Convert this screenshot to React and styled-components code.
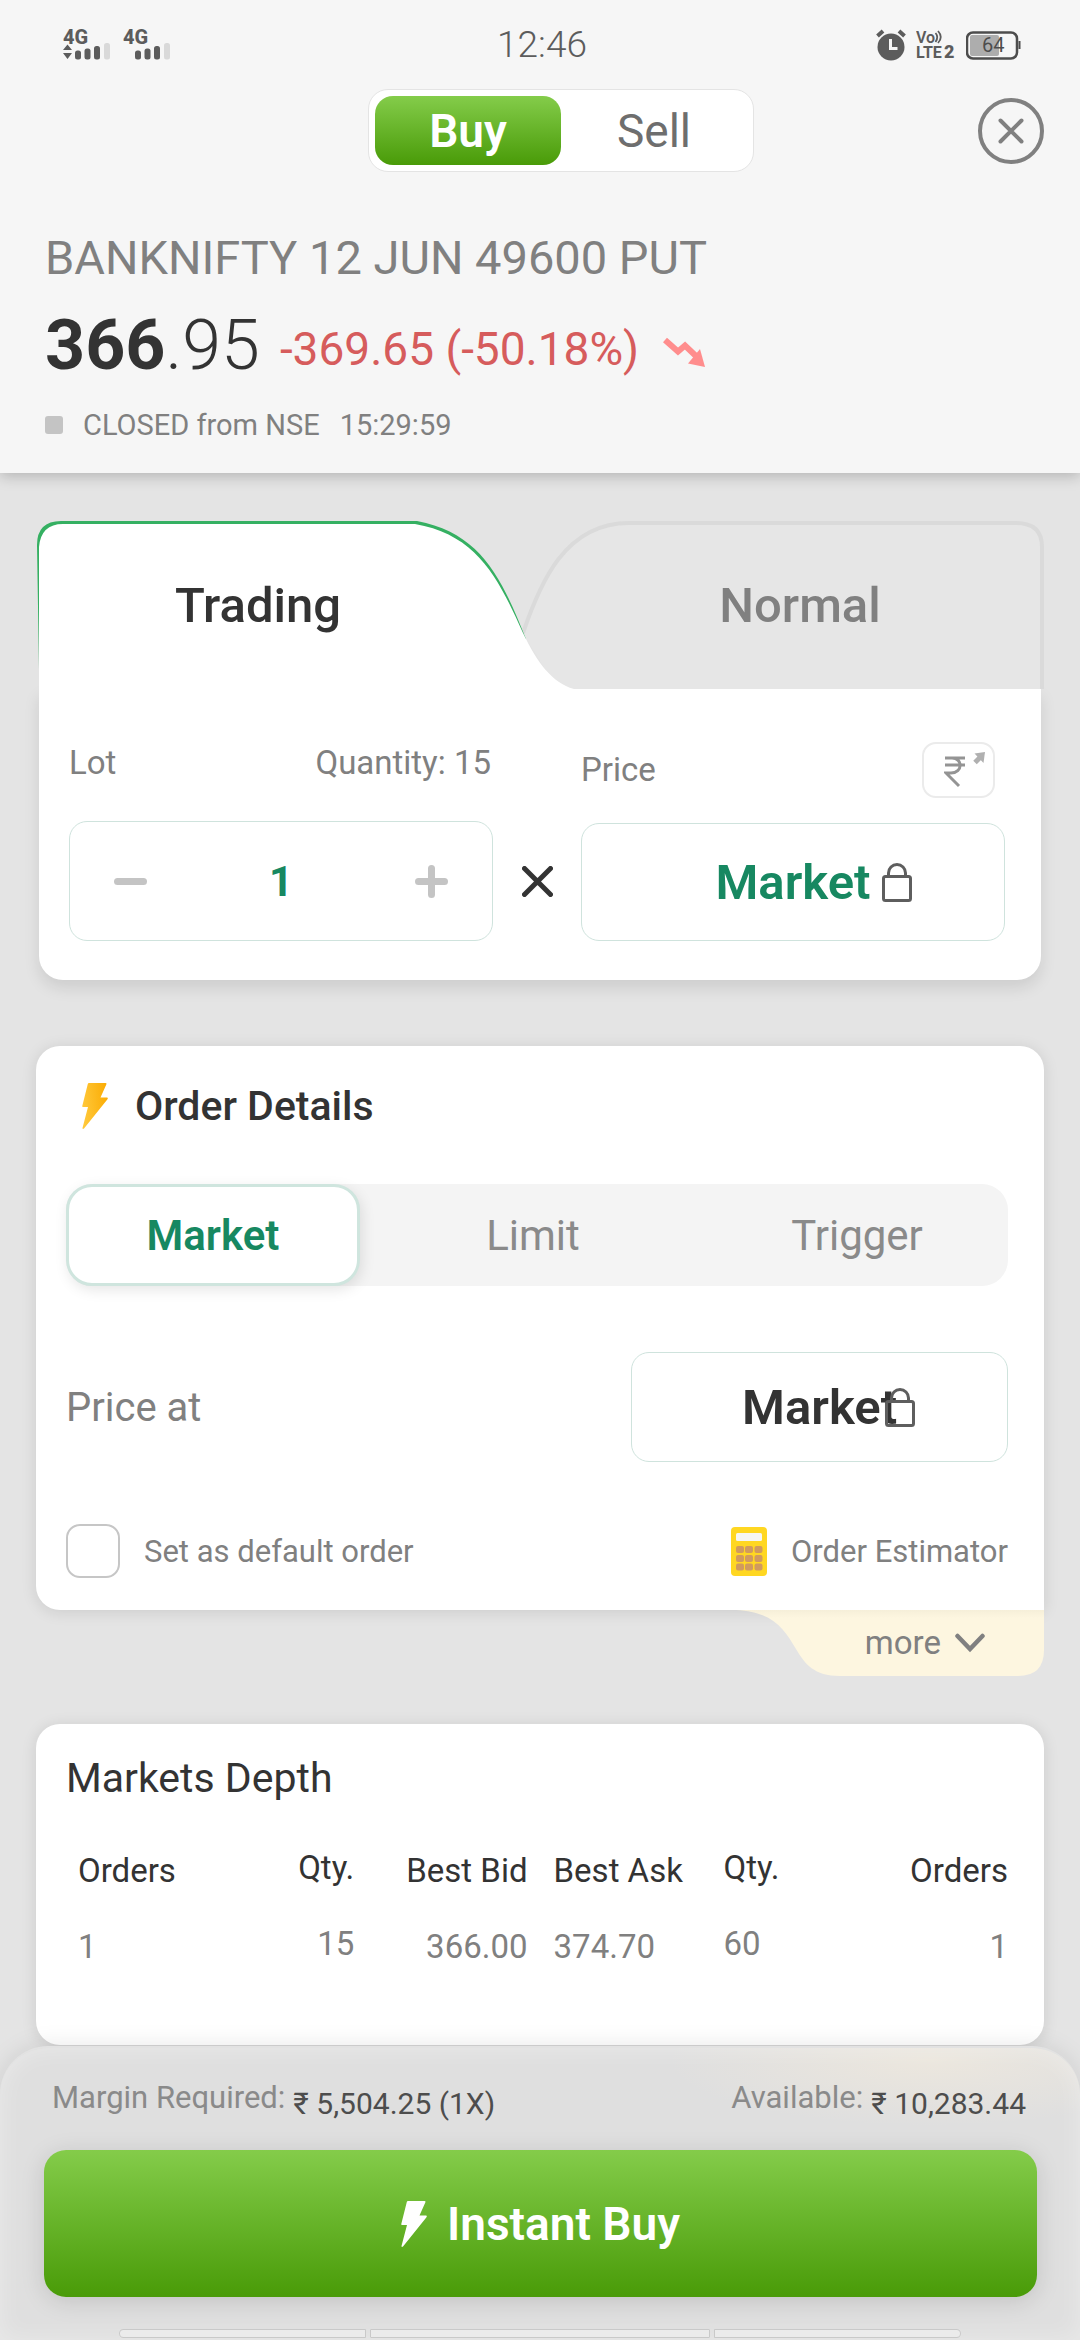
import React, { useState } from 'react';
import styled, { createGlobalStyle, css } from 'styled-components';

const GlobalStyle = createGlobalStyle`
  * {
    box-sizing: border-box;
  }

  body {
    margin: 0;
    background: #e4e4e4;
    color: #333333;
    font-family: Roboto, "Open Sans", sans-serif;
  }

  button, input {
    font-family: inherit;
    color: inherit;
  }

  button {
    border: none;
    background: none;
    padding: 0;
    cursor: pointer;
  }

  svg {
    display: block;
    flex-shrink: 0;
  }
`;

const Page = styled.div`
  min-height: 100vh;
  display: flex;
  flex-direction: column;
`;

/* Header */

const Header = styled.header`
  background: #f6f6f6;
  padding-bottom: 28px;
  box-shadow: 0 3px 14px rgba(0, 0, 0, 0.22);
`;

const StatusBar = styled.div`
  display: grid;
  grid-template-columns: 1fr auto 1fr;
  align-items: center;
  height: 89px;
  padding: 0 59px 0 63px;
  color: #5c5c5c;
`;

const StatusGroup = styled.div`
  display: flex;
  align-items: center;
  gap: ${props => props.$gap}px;
  justify-content: ${props => (props.$end ? 'flex-end' : 'flex-start')};
`;

const Clock = styled.span`
  font-size: 37px;
  font-weight: 300;
`;

const TopRow = styled.div`
  display: grid;
  grid-template-columns: 368fr 386fr 326fr;
  align-items: center;
`;

const Toggle = styled.div`
  grid-column: 2;
  display: flex;
  padding: 6px;
  background: #ffffff;
  border: 1px solid #e4e4e4;
  border-radius: 20px;
`;

const ToggleButton = styled.button`
  flex: 1;
  height: 69px;
  border-radius: 18px;
  font-size: 46px;
  font-weight: ${props => (props.$active ? 600 : 400)};
  color: ${props => (props.$active ? '#ffffff' : '#6e6e6e')};
  background: ${props => (props.$active ? 'linear-gradient(#84cc4a, #499b08)' : 'none')};
`;

const CloseButton = styled.button`
  justify-self: end;
  display: grid;
  place-items: center;
  width: 66px;
  height: 66px;
  margin-right: 36px;
  border: 4px solid #808080;
  border-radius: 50%;
`;

const Quote = styled.div`
  padding: 56px 45px 0;
`;

const Symbol = styled.h1`
  margin: 0;
  font-size: 47px;
  font-weight: 400;
  line-height: 60px;
  color: #808080;
`;

const PriceRow = styled.div`
  display: flex;
  align-items: flex-end;
  margin: 17px 0 20px;
`;

const LastPrice = styled.div`
  font-size: 70px;
  font-weight: 300;
  line-height: 80px;

  strong {
    font-weight: 700;
  }
`;

const Change = styled.div`
  margin: 0 24px 0 20px;
  font-size: 46px;
  line-height: 72px;
  color: #d65c5c;
`;

const TrendIcon = styled.svg`
  margin-bottom: 18px;
`;

const SessionRow = styled.div`
  display: flex;
  align-items: center;
  gap: 20px;
  font-size: 29px;
  line-height: 40px;
  color: #808080;
`;

const SessionDot = styled.span`
  width: 18px;
  height: 18px;
  border-radius: 3px;
  background: #c4c4c4;
`;

/* Cards */

const Content = styled.main`
  padding: 48px 36px 0;
`;

const Card = styled.section`
  position: relative;
  background: #ffffff;
  border-radius: 24px;
  box-shadow: 0 2px 16px rgba(0, 0, 0, 0.11);
`;

const TicketCard = styled.section`
  margin: 0 0 66px 1px;
`;

const TabStrip = styled.div`
  position: relative;
  z-index: 1;
  display: grid;
  grid-template-columns: 442fr 488fr;
  column-gap: 77px;
  height: 168px;
`;

const TabShape = styled.svg`
  position: absolute;
  inset: 0;
  width: 100%;
  height: 100%;
`;

const ProductTab = styled.button`
  position: relative;
  font-size: 49px;
  font-weight: 500;
  color: ${props => (props.$active ? '#333333' : '#808080')};
`;

const TicketBody = styled.div`
  display: grid;
  grid-template-columns: 1fr 88px 1fr;
  margin: 0 3px 0 2px;
  padding: 53px 36px 39px 30px;
  background: #ffffff;
  border-radius: 0 0 24px 24px;
  box-shadow: 0 8px 16px rgba(0, 0, 0, 0.1);
`;

const Field = styled.div`
  display: flex;
  flex-direction: column;
  gap: ${props => props.$gap}px;
`;

const FieldHeader = styled.div`
  display: flex;
  align-items: center;
  justify-content: space-between;
  padding: 0 ${props => props.$right}px 0 0;
  font-size: 33px;
  line-height: 42px;
  color: #808080;
`;

const outlined = css`
  background: #ffffff;
  border: 1px solid #cfe3dd;
  border-radius: 18px;
`;

const Stepper = styled.div`
  ${outlined}
  display: flex;
  align-items: center;
  justify-content: space-between;
  height: 120px;
  padding: 0 44px;
`;

const StepButton = styled.button`
  padding: 12px 0;
`;

const LotInput = styled.input`
  width: 120px;
  border: none;
  outline: none;
  padding: 0;
  text-align: center;
  font-size: 42px;
  font-weight: 700;
  background: none;
  color: #178861;
`;

const Times = styled.div`
  align-self: start;
  display: grid;
  place-items: center;
  height: 120px;
  margin-top: 79px;
`;

const RupeeButton = styled.button`
  display: flex;
  justify-content: flex-end;
  width: 73px;
  height: 56px;
  padding: 8px 7px 0 0;
  border: 2px solid #ebebeb;
  border-radius: 14px;
`;

const LockedBox = styled.div`
  position: relative;
  width: ${props => props.$width || '100%'};
`;

const LockedInput = styled.input`
  ${outlined}
  display: block;
  width: 100%;
  height: ${props => props.$height}px;
  padding: 0;
  text-align: center;
  font-size: 49px;
  font-weight: 600;
  outline: none;
  color: ${props => (props.$green ? '#178861' : '#333333')};
`;

const LockMark = styled.svg`
  position: absolute;
  top: 50%;
  right: 93px;
  margin-top: -19px;
`;

const DetailsCard = styled(Card)`
  padding: 36px 36px 32px 30px;
  border-bottom-right-radius: 0;
`;

const CardTitle = styled.h2`
  display: flex;
  align-items: center;
  gap: 27px;
  margin: 0;
  padding-left: ${props => (props.$icon ? 16 : 0)}px;
  font-size: 41px;
  font-weight: ${props => (props.$icon ? 500 : 400)};
  line-height: 48px;
`;

const TypeTabs = styled.div`
  display: grid;
  grid-template-columns: 294fr 346fr 302fr;
  height: 102px;
  margin: 54px 0 66px;
  background: #f4f4f4;
  border-radius: 26px;
`;

const TypeTab = styled.button`
  border-radius: 26px;
  font-size: 42px;
  color: #8a8a8a;

  ${props => props.$active && css`
    background: #ffffff;
    border: 3px solid #cfe5de;
    box-shadow: 2px 4px 14px rgba(0, 0, 0, 0.1);
    font-weight: 600;
    color: #178861;
  `}
`;

const SplitRow = styled.div`
  display: flex;
  align-items: center;
  justify-content: space-between;
`;

const PriceAt = styled.label`
  font-size: 40px;
  color: #808080;
`;

const FooterRow = styled(SplitRow)`
  margin-top: 62px;
  font-size: 31px;
  color: #808080;
`;

const CheckLabel = styled.label`
  display: flex;
  align-items: center;
  gap: 24px;
`;

const Checkbox = styled.input`
  appearance: none;
  width: 54px;
  height: 54px;
  margin: 0;
  border: 2px solid #c6c6c6;
  border-radius: 14px;
  background: ${props => (props.checked ? '#178861' : '#ffffff')};
`;

const EstimatorButton = styled.button`
  display: flex;
  align-items: center;
  gap: 24px;
  font-size: 31px;
`;

const MoreButton = styled.button`
  position: relative;
  display: flex;
  align-items: center;
  justify-content: flex-end;
  gap: 14px;
  width: 308px;
  height: 66px;
  margin: 0 0 48px auto;
  padding-right: 59px;
  font-size: 33px;
  line-height: 40px;
  color: #808080;
`;

const MoreLabel = styled.span`
  position: relative;
`;

const MoreChevron = styled.svg`
  position: relative;
`;

const DepthCard = styled(Card)`
  padding: 30px 36px 61px 30px;
`;

const DepthTable = styled.table`
  width: 100%;
  margin-top: 30px;
  table-layout: fixed;
  border-collapse: collapse;
`;

const columnStyle = css`
  height: 76px;
  padding: 0 0 ${props => (props.$raised ? 6 : 0)}px ${props => props.$indent || 0}px;
  text-align: ${props => props.$align};
  vertical-align: middle;
  font-size: 33px;
  font-weight: 400;
  white-space: nowrap;
`;

const HeadCell = styled.th`
  ${columnStyle}
  width: ${props => props.$width}%;
`;

const Cell = styled.td`
  ${columnStyle}
  color: #808080;
`;

/* Bottom sheet */

const Sheet = styled.footer`
  position: sticky;
  bottom: 0;
  margin-top: auto;
  padding: 26px 43px 2px 44px;
  border-top: 2px solid #e2e2e2;
  border-radius: 48px 48px 0 0;
  background:
    radial-gradient(ellipse 260px 66px at 86% 4%, #ece7de, rgba(236, 231, 222, 0)),
    #dfdfdf;
  box-shadow: 0 0 24px rgba(0, 0, 0, 0.1), inset 0 0 24px rgba(255, 255, 255, 0.35);
`;

const InfoRow = styled.div`
  display: flex;
  justify-content: space-between;
  margin-bottom: 16px;
  padding: 0 11px 0 8px;
`;

const Info = styled.div`
  display: flex;
  align-items: flex-start;
  gap: 8px;
`;

const InfoLabel = styled.span`
  font-size: 31px;
  line-height: 48px;
  color: #8a8a8a;
`;

const InfoValue = styled.span`
  font-size: 30px;
  line-height: 60px;
  color: #4d4d4d;
`;

const BuyButton = styled.button`
  display: flex;
  align-items: center;
  justify-content: center;
  gap: 20px;
  width: 100%;
  height: 147px;
  border-radius: 22px;
  background: linear-gradient(#84cc4a, #499b08);
  box-shadow: 0 4px 24px rgba(0, 0, 0, 0.13);
  font-size: 46px;
  font-weight: 600;
  color: #ffffff;
`;

const NavHint = styled.div`
  display: grid;
  grid-template-columns: 247fr 340fr 247fr;
  gap: 4px;
  margin: 32px 76px 0 75px;
`;

const NavKey = styled.span`
  height: 9px;
  border: 1px solid #c9c9c9;
  border-radius: ${props => props.$radius || '1px'};
  background: #ebebeb;
`;

const Signal = ({ data }) => (
  <svg width="48" height="44" viewBox="0 -6 48 44" fill="#5c5c5c">
    <text x="0" y="15" fontSize="20" fontWeight="800">4G</text>
    {data && <path d="M4.5 15.5 L9 21 H0 Z M0 24 H9 L4.5 30 Z" />}
    <rect x="12" y="21.5" width="6" height="9" rx="2.5" />
    <rect x="21.5" y="19.5" width="6" height="11" rx="2.5" />
    <rect x="31" y="17" width="6" height="13.5" rx="2.5" />
    <rect x="41" y="14" width="6" height="16.5" rx="2.5" fill="#d9d9d9" />
  </svg>
);

const AlarmIcon = () => (
  <svg width="30" height="32" viewBox="0 0 30 32">
    <circle cx="15" cy="18" r="13.5" fill="#5c5c5c" />
    <path d="M1.5 7 L7 2 M28.5 7 L23 2" stroke="#5c5c5c" strokeWidth="4" />
    <path d="M14.5 10 V19.5 H21.5" stroke="#f6f6f6" strokeWidth="3" fill="none" />
  </svg>
);

const VolteIcon = () => (
  <svg width="40" height="36" viewBox="0 -2 40 36" fill="#5c5c5c">
    <text x="0" y="14" fontSize="16" fontWeight="600">Vo</text>
    <path
      d="M19.5 4 Q23 8 19.5 13 M22 2 Q27.5 8 22 14"
      stroke="#5c5c5c"
      strokeWidth="1.8"
      fill="none"
    />
    <text x="0" y="29" fontSize="16" fontWeight="700">LTE</text>
    <text x="28" y="29" fontSize="18" fontWeight="900">2</text>
  </svg>
);

const BatteryIcon = () => (
  <svg width="55" height="32" viewBox="0 0 55 32">
    <rect x="4" y="6" width="29" height="21" rx="2" fill="#adadad" />
    <rect x="1" y="3.5" width="50" height="26" rx="6" fill="none" stroke="#4d4d4d" strokeWidth="2.5" />
    <path d="M53.5 12 V20" stroke="#4d4d4d" strokeWidth="2" />
    <text x="16" y="23" fontSize="20" fill="#4d4d4d">64</text>
  </svg>
);

const BoltIcon = ({ gradient }) => (
  <svg width="26" height="48" viewBox="0 0 26 48">
    <defs>
      <linearGradient id="bolt" x1="0" y1="0.5" x2="1" y2="0.3">
        <stop offset="0" stopColor="#ffc83a" />
        <stop offset="1" stopColor="#fbac04" />
      </linearGradient>
    </defs>
    <path
      d="M7 1 H23.5 Q25 1 24.3 2.5 L18.5 15.5 H25 Q26.5 16 25.3 17.5 L2 46.5 Q0.5 47.5 0.5 46 L6 25 H1.2 Q0 25 0.4 23.5 L5.8 2 Q6 1 7 1 Z"
      fill={gradient ? 'url(#bolt)' : '#ffffff'}
    />
  </svg>
);

const Lock = () => (
  <LockMark width="30" height="39" viewBox="0 0 30 39" fill="none" stroke="#5e5e5e" strokeWidth="3">
    <rect x="1.5" y="13.5" width="27" height="24" rx="2" />
    <path d="M6.5 13.5 V10 A8.5 8.5 0 0 1 23.5 10 V13.5" />
  </LockMark>
);

const CalculatorIcon = () => (
  <svg width="36" height="49" viewBox="0 0 36 49">
    <rect width="36" height="49" rx="4" fill="#ffd722" />
    <rect x="5" y="6" width="26" height="8" rx="1.5" fill="#f6f6f4" />
    {[19, 28, 36.5].map(y => [5, 14, 23.5].map(x => (
      <rect key={`${x}-${y}`} x={x} y={y} width="8" height="7" rx="2" fill="#d19a5e" />
    )))}
  </svg>
);

const depthColumns = [
  { title: 'Orders', value: '1', align: 'left', width: 14.2, indent: 12 },
  { title: 'Qty.', value: '15', align: 'right', width: 16.4, raised: true },
  { title: 'Best Bid', value: '366.00', align: 'right', width: 18.4 },
  { title: 'Best Ask', value: '374.70', align: 'left', width: 20.8, indent: 26 },
  { title: 'Qty.', value: '60', align: 'left', width: 16, raised: true },
  { title: 'Orders', value: '1', align: 'right', width: 14.2 },
];

const orderTypes = ['Market', 'Limit', 'Trigger'];

export default function App() {
  const [side, setSide] = useState('Buy');
  const [lots, setLots] = useState(1);
  const [orderType, setOrderType] = useState('Market');
  const [isDefault, setIsDefault] = useState(false);

  return (
    <Page>
      <GlobalStyle />
      <Header>
        <StatusBar>
          <StatusGroup $gap={12}>
            <Signal data />
            <Signal />
          </StatusGroup>
          <Clock>12:46</Clock>
          <StatusGroup $gap={10} $end>
            <AlarmIcon />
            <VolteIcon />
            <BatteryIcon />
          </StatusGroup>
        </StatusBar>

        <TopRow>
          <Toggle>
            {['Buy', 'Sell'].map(name => (
              <ToggleButton key={name} $active={side === name} onClick={() => setSide(name)}>
                {name}
              </ToggleButton>
            ))}
          </Toggle>
          <CloseButton aria-label="Close">
            <svg width="26" height="26" viewBox="0 0 26 26" stroke="#808080" strokeWidth="4" strokeLinecap="round">
              <path d="M2.5 2.5 L23.5 23.5 M23.5 2.5 L2.5 23.5" />
            </svg>
          </CloseButton>
        </TopRow>

        <Quote>
          <Symbol>BANKNIFTY 12 JUN 49600 PUT</Symbol>
          <PriceRow>
            <LastPrice><strong>366</strong>.95</LastPrice>
            <Change>-369.65 (-50.18%)</Change>
            <TrendIcon width="42" height="30" viewBox="0 0 42 30">
              <path d="M2 3 L15 14.5 L22 8.5 L34 20" fill="none" stroke="#ff8d8d" strokeWidth="6" />
              <path d="M37 12 L42 30 L25 26.5 Z" fill="#ff8d8d" />
            </TrendIcon>
          </PriceRow>
          <SessionRow>
            <SessionDot />
            <span>CLOSED from NSE</span>
            <span>15:29:59</span>
          </SessionRow>
        </Quote>
      </Header>

      <Content>
        <TicketCard>
          <TabStrip>
            <TabShape viewBox="0 0 1007 168" preserveAspectRatio="none">
              <path
                d="M486 112 C503 62 528 2 592 2 H979 Q1005 2 1005 26 V168 H520 Z"
                fill="#e6e6e6"
              />
              <path
                d="M486 112 C503 62 528 2 592 2 H979 Q1005 2 1005 26 V168"
                fill="none"
                stroke="#dadada"
                strokeWidth="4"
              />
              <path d="M2 148 L0 24 Q0 0 24 0 H380 C443 12 464 55 489 118 L300 118 Z" fill="#35b062" />
              <path
                d="M2 168 V26 Q4 3 26 3 H378 C440 14 461 56 486 112 C500 141 515 162 537 168 Z"
                fill="#ffffff"
              />
            </TabShape>
            <ProductTab $active>Trading</ProductTab>
            <ProductTab>Normal</ProductTab>
          </TabStrip>
          <TicketBody>
            <Field $gap={37}>
              <FieldHeader $right={2}>
                <label htmlFor="lot">Lot</label>
                <span>Quantity: {lots * 15}</span>
              </FieldHeader>
              <Stepper>
                <StepButton aria-label="Decrease" onClick={() => setLots(Math.max(1, lots - 1))}>
                  <svg width="33" height="33" viewBox="0 0 33 33" stroke="#c4c4c4" strokeWidth="7" strokeLinecap="round">
                    <path d="M3.5 16.5 H29.5" />
                  </svg>
                </StepButton>
                <LotInput id="lot" value={lots} onChange={e => setLots(Number(e.target.value) || 1)} />
                <StepButton aria-label="Increase" onClick={() => setLots(lots + 1)}>
                  <svg width="33" height="33" viewBox="0 0 33 33" stroke="#c4c4c4" strokeWidth="7" strokeLinecap="round">
                    <path d="M3.5 16.5 H29.5 M16.5 3.5 V29.5" />
                  </svg>
                </StepButton>
              </Stepper>
            </Field>
            <Times>
              <svg width="31" height="31" viewBox="0 0 31 31" stroke="#333333" strokeWidth="5" strokeLinecap="round">
                <path d="M2.5 2.5 L28.5 28.5 M28.5 2.5 L2.5 28.5" />
              </svg>
            </Times>
            <Field $gap={25}>
              <FieldHeader $right={10}>
                <label htmlFor="price">Price</label>
                <RupeeButton aria-label="Show in rupees">
                  <svg width="42" height="36" viewBox="0 0 42 36" fill="none" stroke="#949494" strokeWidth="3">
                    <path d="M1 6 H21 M1 13 H21 M2 6 H8 C19 6 19 21 7 21 H2 L15 34" />
                    <path d="M31 10.5 L37 4.5" stroke="#b0b0b0" strokeWidth="5" />
                    <path d="M30.5 1.5 L41 0 L39.5 11 Z" fill="#b0b0b0" stroke="none" />
                  </svg>
                </RupeeButton>
              </FieldHeader>
              <LockedBox>
                <LockedInput id="price" $height={118} $green readOnly value={orderType} />
                <Lock />
              </LockedBox>
            </Field>
          </TicketBody>
        </TicketCard>

        <DetailsCard>
          <CardTitle $icon>
            <BoltIcon gradient />
            Order Details
          </CardTitle>
          <TypeTabs>
            {orderTypes.map(type => (
              <TypeTab key={type} $active={type === orderType} onClick={() => setOrderType(type)}>
                {type}
              </TypeTab>
            ))}
          </TypeTabs>
          <SplitRow>
            <PriceAt htmlFor="price-at">Price at</PriceAt>
            <LockedBox $width="40%">
              <LockedInput id="price-at" $height={110} readOnly value={orderType} />
              <Lock />
            </LockedBox>
          </SplitRow>
          <FooterRow>
            <CheckLabel>
              <Checkbox
                type="checkbox"
                checked={isDefault}
                onChange={e => setIsDefault(e.target.checked)}
              />
              Set as default order
            </CheckLabel>
            <EstimatorButton>
              <CalculatorIcon />
              Order Estimator
            </EstimatorButton>
          </FooterRow>
        </DetailsCard>

        <MoreButton>
          <TabShape viewBox="0 0 308 66" preserveAspectRatio="none">
            <defs>
              <linearGradient id="moreFill" x1="0" y1="0" x2="0" y2="1">
                <stop offset="0" stopColor="#f6efd9" />
                <stop offset="0.12" stopColor="#fdf6e0" />
              </linearGradient>
            </defs>
            <path
              d="M0 0 C38 2 48 19 60 39 C69 54 78 66 104 66 H282 Q308 66 308 40 V0 Z"
              fill="url(#moreFill)"
            />
          </TabShape>
          <MoreLabel>more</MoreLabel>
          <MoreChevron width="30" height="20" viewBox="0 0 30 20" fill="none" stroke="#808080" strokeWidth="4.5" strokeLinecap="round">
            <path d="M2.5 3 L15 16 L27.5 3" />
          </MoreChevron>
        </MoreButton>

        <DepthCard>
          <CardTitle>Markets Depth</CardTitle>
          <DepthTable>
            <thead>
              <tr>
                {depthColumns.map((col, index) => (
                  <HeadCell
                    key={index}
                    $align={col.align}
                    $width={col.width}
                    $indent={col.indent}
                    $raised={col.raised}
                  >
                    {col.title}
                  </HeadCell>
                ))}
              </tr>
            </thead>
            <tbody>
              <tr>
                {depthColumns.map((col, index) => (
                  <Cell key={index} $align={col.align} $indent={col.indent} $raised={col.raised}>
                    {col.value}
                  </Cell>
                ))}
              </tr>
            </tbody>
          </DepthTable>
        </DepthCard>
      </Content>

      <Sheet>
        <InfoRow>
          <Info>
            <InfoLabel>Margin Required:</InfoLabel>
            <InfoValue>₹ 5,504.25 (1X)</InfoValue>
          </Info>
          <Info>
            <InfoLabel>Available:</InfoLabel>
            <InfoValue>₹ 10,283.44</InfoValue>
          </Info>
        </InfoRow>
        <BuyButton>
          <BoltIcon />
          Instant Buy
        </BuyButton>
        <NavHint>
          <NavKey $radius="5px 1px 1px 5px" />
          <NavKey />
          <NavKey $radius="1px 5px 5px 1px" />
        </NavHint>
      </Sheet>
    </Page>
  );
}
